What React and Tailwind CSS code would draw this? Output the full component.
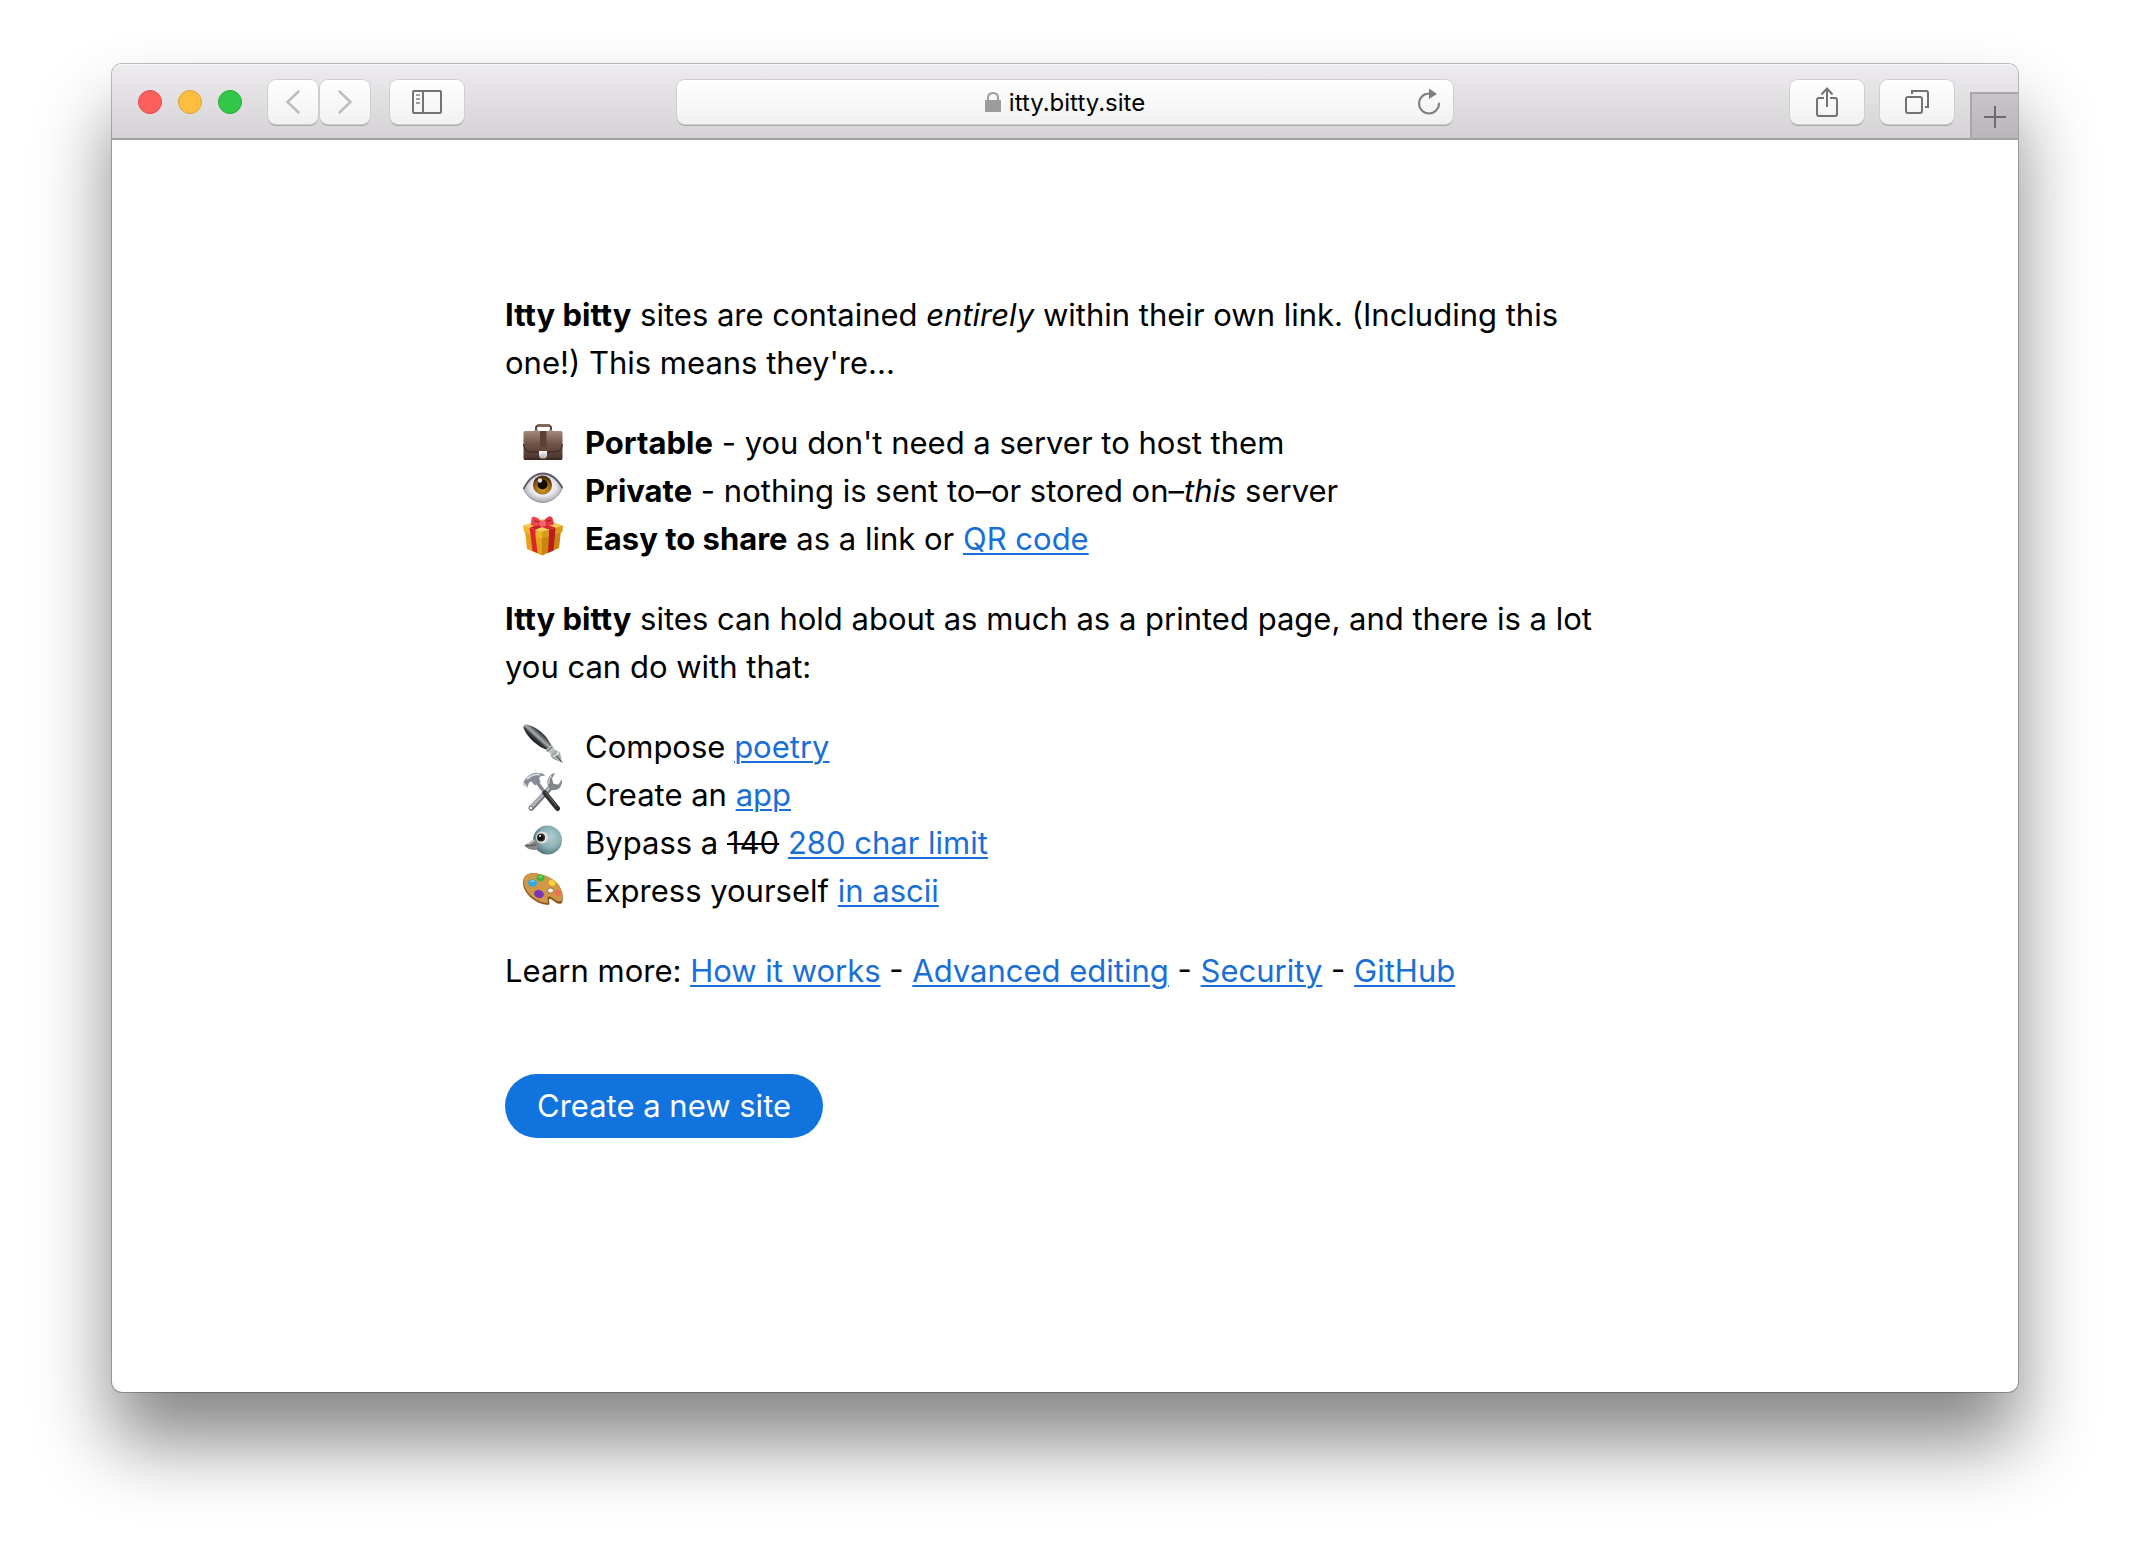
import { useState } from "react";

const Briefcase = () => (
    <svg viewBox="0 0 40 40" className="mt-px size-10 shrink-0" aria-hidden="true">
        <defs>
            <linearGradient id="case" x1="0" y1="0" x2="0" y2="1">
                <stop offset="0" stopColor="#a5897a" />
                <stop offset="0.45" stopColor="#6f5347" />
                <stop offset="1" stopColor="#4a332b" />
            </linearGradient>
            <linearGradient id="clasp" x1="0" y1="0" x2="0" y2="1">
                <stop offset="0" stopColor="#ffffff" />
                <stop offset="1" stopColor="#a9a9a9" />
            </linearGradient>
        </defs>
        <path d="M13 11V8q0-2.500 3-2.500h9q3 0 3 2.500v3" fill="none" stroke="#5a3d33" strokeWidth="2" />
        <path d="M15 5.500h11" stroke="#7d5b4e" strokeWidth="2.600" strokeLinecap="round" />
        <path d="M11.500 10.500h3.500M26 10.500h3.500" stroke="#8b8b8b" strokeWidth="1.600" />
        <path d="M2 11h36q1.500 0 1.500 2v25q0 2-2 2H2.500q-2 0-2-2V13q0-2 1.500-2z" fill="url(#case)" />
        <path d="M17 11h6.500v16H17z" fill="#5b4036" />
        <path d="M0.500 24q1 8 7 8h25q6 0 7-8" fill="none" stroke="#35221c" strokeWidth="1" />
        <path d="M1 39h38" stroke="#38251f" strokeWidth="1.500" />
        <path d="M16 31h8v5l-1.500 2.500h-5L16 36z" fill="url(#clasp)" />
    </svg>
);

const Eye = () => (
    <svg viewBox="0 0 40 40" className="mt-px size-10 shrink-0" aria-hidden="true">
        <defs>
            <radialGradient id="ball" cx="0.5" cy="0.45" r="0.55">
                <stop offset="0" stopColor="#ffffff" />
                <stop offset="0.6" stopColor="#e6e6ec" />
                <stop offset="1" stopColor="#a3a1ad" />
            </radialGradient>
            <radialGradient id="iris" cx="0.5" cy="0.7" r="0.6">
                <stop offset="0" stopColor="#d9a32c" />
                <stop offset="0.7" stopColor="#94640f" />
                <stop offset="1" stopColor="#4a2f0b" />
            </radialGradient>
        </defs>
        <path d="M0.500 21C5 12 12 6 20 6s15 6 19.500 14C36 28 29 34.500 20 34.500S4 29 0.500 21z" fill="url(#ball)" stroke="#8f8c98" strokeWidth="0.8" />
        <path d="M0.500 21C5 12 12 5.500 20 5.500S35 12 39.500 20" fill="none" stroke="#5f5c69" strokeWidth="1.800" />
        <circle cx="19.500" cy="17" r="9.500" fill="url(#iris)" />
        <circle cx="19.500" cy="16.500" r="5" fill="#160d05" />
        <circle cx="17" cy="12.500" r="2.200" fill="#ffffff" opacity="0.85" />
    </svg>
);

const Gift = () => (
    <svg viewBox="0 0 40 40" className="mt-px size-10 shrink-0" aria-hidden="true">
        <path d="M2 15l17 6v18.500L4 33z" fill="#e5a11b" />
        <path d="M38 15l-19 6v18.500L36 32z" fill="#c98412" />
        <path d="M0 9.500L20 3l20 6.500-21 6z" fill="#f6cc55" />
        <path d="M0 9.500l19 6v7L1 16z" fill="#f0b62b" />
        <path d="M40 9.500l-21 6v7L39.500 16z" fill="#dc9a1a" />
        <path d="M6.500 11.500l6 2v7l2 16.500-5-2-2-16.500z" fill="#d9252b" />
        <path d="M32.500 11.700l-6.500 2v7.300L25 37l5.500-2.500 1.500-16z" fill="#bd1b22" />
        <path d="M7 11.500L26 5l5 1.500-18.500 7z" fill="#c01f27" />
        <path d="M9 5l5 .500 18.500 6-6 2.200L8 7z" fill="#d62a31" />
        <path d="M19 7C16 1 9-1 8.500 2.500L8 9c4 2 8 1 11-2z" fill="#ec4650" />
        <path d="M20 7c2-6 8-8.500 9.500-5L31 8c-4 2.500-8 1.500-11-1z" fill="#e43640" />
        <path d="M11 5q4 0 7 2M28 4q-4 1-7 3" stroke="#a5151d" strokeWidth="1" fill="none" />
        <rect x="16.500" y="4.500" width="6.500" height="6" rx="2" fill="#f4626a" />
    </svg>
);

const Pen = () => (
    <svg viewBox="0 0 40 40" className="mt-px size-10 shrink-0" aria-hidden="true">
        <defs>
            <linearGradient id="barrel" x1="0.65" y1="0.35" x2="0.35" y2="0.65">
                <stop offset="0" stopColor="#2c2f30" />
                <stop offset="0.45" stopColor="#a8afb0" />
                <stop offset="0.7" stopColor="#34383a" />
                <stop offset="1" stopColor="#1b1d1e" />
            </linearGradient>
        </defs>
        <path d="M0.500 4Q0 0 4 0.500C12 2.500 19 8 24 14l5 8-4 4.500-7.500-3.500C10 18 4 12 0.500 4z" fill="url(#barrel)" />
        <path d="M28.500 21l3.500 5-4 4-5.500-4z" fill="#b9bebf" />
        <path d="M29.500 22.500l-5.500 5" stroke="#4c5152" strokeWidth="1" />
        <path d="M32 26q5.500 1 5.500 5l1.500 7.500-7.500-3q-3.500-1-4-5z" fill="#a3a8a9" />
        <path d="M33 31l6 7.500" stroke="#3b3e3f" strokeWidth="1" />
        <path d="M34 27.500l1.500 2-5 3" stroke="#e9eced" strokeWidth="1.300" fill="none" />
    </svg>
);

const Tools = () => (
    <svg viewBox="0 0 40 40" className="mt-px size-10 shrink-0" aria-hidden="true">
        <path d="M29 14L8.500 36" stroke="#77757e" strokeWidth="5.500" strokeLinecap="round" />
        <path d="M28 14L8 35.500" stroke="#b4b1ba" strokeWidth="3" strokeLinecap="round" />
        <path d="M25 14q-2-6 2-10.500Q29 1 32 1l-3 5.500 1.500 5.500 5 .500L39 7q.500 6-3 9.500-4 3-9 1z" fill="#82868c" />
        <path d="M26 12q-1-5 2.500-8.500" stroke="#c9ccd0" strokeWidth="1.500" fill="none" />
        <circle cx="8" cy="36" r="1.800" fill="#ffffff" stroke="#605e66" strokeWidth="0.8" />
        <path d="M14 10l8 11" stroke="#858a91" strokeWidth="3.500" />
        <path d="M22 21l12.500 15.500" stroke="#2b2c2e" strokeWidth="5" strokeLinecap="round" />
        <path d="M22.500 20l11 14" stroke="#6b6d70" strokeWidth="1.200" />
        <path d="M0 11l3-5Q9 0 16 1q5 0 6 3-4-1-6 2l1.500 4-5.500 3.500-3.500-4L6 10.500l-1.500 5L0 13z" fill="#858c95" />
        <path d="M4 7q5-5 13-4.500" stroke="#d9dee4" strokeWidth="1.800" fill="none" />
        <path d="M0 11l4 4" stroke="#cfd5dc" strokeWidth="2" />
    </svg>
);

const Bird = () => (
    <svg viewBox="0 0 40 40" className="mt-px size-10 shrink-0" aria-hidden="true">
        <defs>
            <radialGradient id="head" cx="0.6" cy="0.4" r="0.6">
                <stop offset="0" stopColor="#b0cccf" />
                <stop offset="0.6" stopColor="#8bb0b5" />
                <stop offset="1" stopColor="#57797f" />
            </radialGradient>
        </defs>
        <circle cx="24.500" cy="20" r="14.500" fill="url(#head)" />
        <path d="M11 19Q6 23 1.500 25.500q3 4.500 11.500 4.500l3-4Q15 20 11 19z" fill="#858688" />
        <path d="M2 25.500q6 1 11-1" stroke="#505153" strokeWidth="1" fill="none" />
        <path d="M5 24q4-2 6.500-4" stroke="#cfd0d2" strokeWidth="1.200" fill="none" />
        <circle cx="19" cy="17.500" r="6" fill="#dbe2e3" />
        <circle cx="18" cy="17.500" r="4" fill="#3a2a24" />
        <circle cx="17.500" cy="18" r="2.600" fill="#0c0908" />
        <circle cx="17" cy="16" r="1" fill="#ffffff" />
    </svg>
);

const Palette = () => (
    <svg viewBox="0 0 40 40" className="mt-px size-10 shrink-0" aria-hidden="true">
        <path d="M0 13C1 6 7 4.500 14 5.500c9 1.500 18 6 22 12 3 5 4.500 10 3.500 16-.500 2.500-3 3-6 1.500l-5-3.500c-2-1-3-.500-2.500 1.500.500 2 1 4-1.500 4C12 36-1 25 0 13z" fill="#8d5722" />
        <path d="M0.500 12C1.500 6 7 4.500 14 5.500c9 1.500 18 6 22 12 3 5 4 9 3.300 14-.500 2-2.800 2.500-5.800 1L28 29c-3-1-4 0-3.500 2 .500 2 1 4-1.500 4C12 33.500 0 23 0.500 12z" fill="#cf9746" />
        <ellipse cx="27.500" cy="22.500" rx="3" ry="2.500" fill="#ffffff" stroke="#8d5722" strokeWidth="0.8" />
        <ellipse cx="9.500" cy="15" rx="4.500" ry="3.800" fill="#30a9dd" />
        <ellipse cx="17.500" cy="10" rx="4" ry="3.200" fill="#3eb93c" />
        <ellipse cx="29" cy="15" rx="3.600" ry="2.800" fill="#f7d13b" transform="rotate(30 29 15)" />
        <ellipse cx="35" cy="25" rx="3.600" ry="2.800" fill="#f0704f" transform="rotate(30 35 25)" />
        <ellipse cx="16" cy="26" rx="5" ry="4" fill="#7b35b8" transform="rotate(20 16 26)" />
        <path d="M7.500 13.500q2-1.500 4 0M16 9q2-1 3 0" stroke="#bfe9f5" strokeWidth="1" fill="none" />
    </svg>
);

const ToolbarButton = ({ label, className, children }) => (
    <button
        type="button"
        aria-label={label}
        className={`flex h-11 items-center justify-center rounded-lg bg-linear-to-b from-white to-[#f1f1f1] shadow-[0_0_0_1px_#cfcdd0,0_2px_0_0_#aaa8ab] ${className}`}
    >
        {children}
    </button>
);

const Toolbar = () => {
    const [address, setAddress] = useState("itty.bitty.site");

    return (
        <header className="flex h-[76px] items-center rounded-t-[10px] bg-linear-to-b from-[#edebee] to-[#d5d2d6] shadow-[inset_0_-2px_0_0_#a3a1a5,inset_0_1px_0_0_#f6f5f7]">
            <div className="flex flex-1 items-center">
                <div className="mx-[26px] flex gap-4">
                    <button type="button" aria-label="Close" className="size-6 rounded-full border border-[#e2474a] bg-[#fc605c]" />
                    <button type="button" aria-label="Minimize" className="size-6 rounded-full border border-[#dfa035] bg-[#fdbd41]" />
                    <button type="button" aria-label="Zoom" className="size-6 rounded-full border border-[#26a934] bg-[#34c84a]" />
                </div>
                <div className="mr-5 flex gap-0.5">
                    <ToolbarButton label="Back" className="w-[50px]">
                        <svg viewBox="0 0 14 24" className="h-6 w-3.5" fill="none" stroke="#bdbdbd" strokeWidth="2.500" strokeLinecap="round">
                            <path d="M12.500 1.500L1.500 12l11 10.500" />
                        </svg>
                    </ToolbarButton>
                    <ToolbarButton label="Forward" className="w-[50px]">
                        <svg viewBox="0 0 14 24" className="h-6 w-3.5" fill="none" stroke="#bdbdbd" strokeWidth="2.500" strokeLinecap="round">
                            <path d="M1.500 1.500l11 10.500-11 10.500" />
                        </svg>
                    </ToolbarButton>
                </div>
                <ToolbarButton label="Show sidebar" className="w-[74px]">
                    <svg viewBox="0 0 30 24" className="h-6 w-[30px]" fill="none" stroke="#737373" strokeWidth="2">
                        <rect x="1" y="1" width="28" height="22" rx="1" />
                        <path d="M11 1v22" />
                        <path d="M4 5h4M4 9h4M4 13h4" stroke="#a0a0a0" />
                    </svg>
                </ToolbarButton>
            </div>

            <div className="grid h-11 w-[776px] grid-cols-[1fr_auto_1fr] items-center rounded-lg bg-linear-to-b from-white to-[#f1f1f1] shadow-[0_0_0_1px_#cfcdd0,0_2px_0_0_#aaa8ab]">
                <label htmlFor="address" className="col-start-2 flex items-center gap-2">
                    <svg viewBox="0 0 16 20" className="h-5 w-4" role="img" aria-label="Secure">
                        <path d="M3 9V6q0-5 5-5t5 5v3" fill="none" stroke="#9c9c9c" strokeWidth="2" />
                        <rect y="8" width="16" height="12" fill="#9c9c9c" />
                    </svg>
                    <input
                        id="address"
                        type="text"
                        value={address}
                        onChange={(e) => setAddress(e.target.value)}
                        className="field-sizing-content bg-transparent pt-0.5 text-[24px] leading-8 outline-none"
                    />
                </label>
                <button type="button" aria-label="Reload" className="mr-3 justify-self-end">
                    <svg viewBox="0 0 24 28" className="h-7 w-6" fill="none">
                        <path d="M12 5.500a10 10 0 1 0 10 10" stroke="#7f7f7f" strokeWidth="2" strokeLinecap="round" />
                        <path d="M12 .500l8 5.500-8 5z" fill="#7f7f7f" />
                    </svg>
                </button>
            </div>

            <div className="flex flex-1 items-center justify-end gap-4 self-stretch">
                <ToolbarButton label="Share" className="w-[74px]">
                    <svg viewBox="0 0 22 30" className="h-[30px] w-[22px]" fill="none" stroke="#737373" strokeWidth="2">
                        <path d="M8 11H3q-2 0-2 2v14q0 2 2 2h16q2 0 2-2V13q0-2-2-2h-5" />
                        <path d="M11 20V2M5.500 7.500L11 1.500l5.500 6" />
                    </svg>
                </ToolbarButton>
                <ToolbarButton label="Show all tabs" className="w-[74px]">
                    <svg viewBox="0 0 24 24" className="size-6" fill="none" stroke="#737373" strokeWidth="2">
                        <rect x="1" y="7" width="16" height="16" rx="2" />
                        <path d="M7 4V1h14q2 0 2 2v14h-3" />
                    </svg>
                </ToolbarButton>
                <button
                    type="button"
                    aria-label="New tab"
                    className="flex h-12 w-12 items-center justify-center self-end border-t-2 border-l-2 border-[#a8a6aa] bg-linear-to-b from-[#c7c5c9] to-[#b9b6ba] shadow-[inset_0_-2px_0_0_#a3a1a5]"
                >
                    <svg viewBox="0 0 22 22" className="size-[22px]" stroke="#6d6b6f" strokeWidth="2">
                        <path d="M11 0v22M0 11h22" />
                    </svg>
                </button>
            </div>
        </header>
    );
};

const Link = ({ children }) => (
    <a href="#" className="text-[#1a6fd6] underline decoration-2 underline-offset-3">{children}</a>
);

const Item = ({ icon, children }) => (
    <li className="flex items-start gap-[22px]">
        {icon}
        <span>{children}</span>
    </li>
);

const App = () => {
    return (
        <div className="bg-white px-28 pt-16 pb-40 font-['Inter','Liberation_Sans',sans-serif] text-black">
            <div className="rounded-[10px] bg-white shadow-[0_0_0_1px_rgba(0,0,0,0.25),0_50px_76px_0_rgba(0,0,0,0.48)]">
                <Toolbar />
                <main className="mx-auto max-w-[1120px] pt-[151px] pb-[254px] text-[31px] leading-12">
                    <p>
                        <b>Itty bitty</b> sites are contained <em>entirely</em> within their own link. (Including this one!) This means they're...
                    </p>
                    <ul className="my-8 pl-[18px]">
                        <Item icon={<Briefcase />}><b>Portable</b> - you don't need a server to host them</Item>
                        <Item icon={<Eye />}><b>Private</b> - nothing is sent to–or stored on–<em>this</em> server</Item>
                        <Item icon={<Gift />}><b>Easy to share</b> as a link or <Link>QR code</Link></Item>
                    </ul>
                    <p>
                        <b>Itty bitty</b> sites can hold about as much as a printed page, and there is a lot you can do with that:
                    </p>
                    <ul className="my-8 pl-[18px]">
                        <Item icon={<Pen />}>Compose <Link>poetry</Link></Item>
                        <Item icon={<Tools />}>Create an <Link>app</Link></Item>
                        <Item icon={<Bird />}>Bypass a <s className="decoration-2">140</s> <Link>280 char limit</Link></Item>
                        <Item icon={<Palette />}>Express yourself <Link>in ascii</Link></Item>
                    </ul>
                    <p>
                        Learn more: <Link>How it works</Link> - <Link>Advanced editing</Link> - <Link>Security</Link> - <Link>GitHub</Link>
                    </p>
                    <button type="button" className="mt-[79px] block h-16 rounded-full bg-[#1173de] px-8 text-white">
                        Create a new site
                    </button>
                </main>
            </div>
        </div>
    );
};

export default App;
